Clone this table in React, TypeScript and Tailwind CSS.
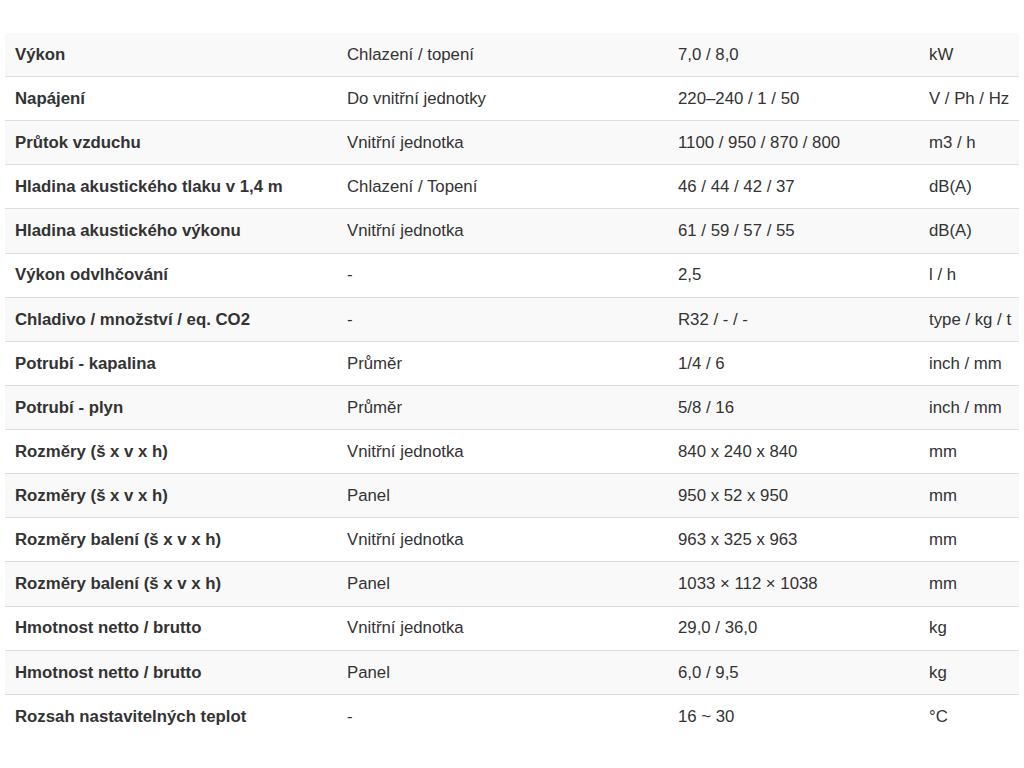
const rows: [string, string, string, string][] = [
  ["Výkon", "Chlazení / topení", "7,0 / 8,0", "kW"],
  ["Napájení", "Do vnitřní jednotky", "220–240 / 1 / 50", "V / Ph / Hz"],
  ["Průtok vzduchu", "Vnitřní jednotka", "1100 / 950 / 870 / 800", "m3 / h"],
  ["Hladina akustického tlaku v 1,4 m", "Chlazení / Topení", "46 / 44 / 42 / 37", "dB(A)"],
  ["Hladina akustického výkonu", "Vnitřní jednotka", "61 / 59 / 57 / 55", "dB(A)"],
  ["Výkon odvlhčování", "-", "2,5", "l / h"],
  ["Chladivo / množství / eq. CO2", "-", "R32 / - / -", "type / kg / t"],
  ["Potrubí - kapalina", "Průměr", "1/4 / 6", "inch / mm"],
  ["Potrubí - plyn", "Průměr", "5/8 / 16", "inch / mm"],
  ["Rozměry (š x v x h)", "Vnitřní jednotka", "840 x 240 x 840", "mm"],
  ["Rozměry (š x v x h)", "Panel", "950 x 52 x 950", "mm"],
  ["Rozměry balení (š x v x h)", "Vnitřní jednotka", "963 x 325 x 963", "mm"],
  ["Rozměry balení (š x v x h)", "Panel", "1033 × 112 × 1038", "mm"],
  ["Hmotnost netto / brutto", "Vnitřní jednotka", "29,0 / 36,0", "kg"],
  ["Hmotnost netto / brutto", "Panel", "6,0 / 9,5", "kg"],
  ["Rozsah nastavitelných teplot", "-", "16 ~ 30", "°C"],
];

export default function App() {
  return (
    <div
      className="min-h-[768px] w-[1024px] bg-white pt-[33px] pl-[5px] pr-[5px] text-[#333] text-[16.8px]"
      style={{ fontFamily: '"Liberation Sans", Arial, sans-serif' }}
    >
      <div className="w-[1014px]">
        {rows.map((r, i) => (
          <div
            key={i}
            className={`flex items-center ${i === 0 ? "h-[43px]" : "h-[44.14px] border-t border-[#ddd]"} ${i % 2 === 0 ? "bg-[#f9f9f9]" : "bg-white"}`}
          >
            <div className="w-[332px] pl-[10px] font-bold whitespace-nowrap">{r[0]}</div>
            <div className="w-[331px] pl-[10px] whitespace-nowrap">{r[1]}</div>
            <div className="w-[251px] pl-[10px] whitespace-nowrap">{r[2]}</div>
            <div className="w-[100px] pl-[10px] whitespace-nowrap">{r[3]}</div>
          </div>
        ))}
      </div>
    </div>
  );
}
